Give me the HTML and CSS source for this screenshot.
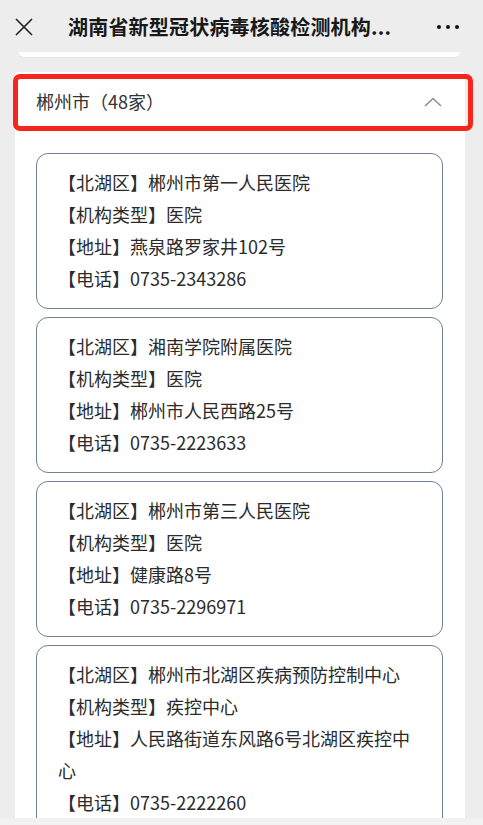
FILE: index.html
```html
<!DOCTYPE html>
<html lang="zh-CN">
<head>
    <meta charset="UTF-8">
    <meta name="viewport" content="width=device-width, initial-scale=1.0">
    <title>湖南省新型冠状病毒核酸检测机构</title>
    <link rel="stylesheet" href="styles.css">
</head>
<body>
    <header class="topbar">
        <svg class="close-icon" width="18" height="18" viewBox="0 0 18 18">
            <path d="M1 1 L17 17 M17 1 L1 17" stroke="#1f1f1f" stroke-width="1.6" fill="none"/>
        </svg>
        <h1 class="title">湖南省新型冠状病毒核酸检测机构...</h1>
        <div class="more">
            <span></span><span></span><span></span>
        </div>
    </header>

    <main class="content">
        <div class="prev-card"></div>

        <section class="panel">
            <div class="panel-head">
                <span class="city">郴州市（48家）</span>
                <svg class="chevron" width="18" height="10" viewBox="0 0 18 10">
                    <path d="M1 9 L9 1.5 L17 9" stroke="#8c8c8c" stroke-width="1.5" fill="none"/>
                </svg>
            </div>
            <div class="highlight"></div>

            <div class="list">
                <div class="item">
                    <p>【北湖区】郴州市第一人民医院</p>
                    <p>【机构类型】医院</p>
                    <p>【地址】燕泉路罗家井102号</p>
                    <p>【电话】0735-2343286</p>
                </div>
                <div class="item">
                    <p>【北湖区】湘南学院附属医院</p>
                    <p>【机构类型】医院</p>
                    <p>【地址】郴州市人民西路25号</p>
                    <p>【电话】0735-2223633</p>
                </div>
                <div class="item">
                    <p>【北湖区】郴州市第三人民医院</p>
                    <p>【机构类型】医院</p>
                    <p>【地址】健康路8号</p>
                    <p>【电话】0735-2296971</p>
                </div>
                <div class="item">
                    <p>【北湖区】郴州市北湖区疾病预防控制中心</p>
                    <p>【机构类型】疾控中心</p>
                    <p>【地址】人民路街道东风路6号北湖区疾控中心</p>
                    <p>【电话】0735-2222260</p>
                </div>
            </div>
        </section>
    </main>

    <div class="bottom-strip"></div>
</body>
</html>
```

FILE: styles.css
```css
html, body {
    margin: 0;
    padding: 0;
}
body {
    height: 825px;
    overflow: hidden;
    display: flex;
    flex-direction: column;
    background-color: #ededed;
    font-family: "Noto Sans CJK SC", "Noto Sans", sans-serif;
    color: #2b2b2b;
}
.topbar {
    height: 52px;
    flex-shrink: 0;
    display: flex;
    align-items: center;
    padding: 0 24px 0 15px;
    background-color: #ededed;
}
.close-icon {
    flex-shrink: 0;
    margin-top: 1px;
}
.title {
    flex: 1;
    margin: 0 0 0 35px;
    font-size: 20px;
    font-weight: 700;
    color: #181818;
    white-space: nowrap;
    letter-spacing: 0.2px;
}
.more {
    display: flex;
    gap: 5px;
    margin-top: 1px;
}
.more span {
    width: 4px;
    height: 4px;
    border-radius: 50%;
    background: #111;
}
.content {
    flex: 1;
    overflow: hidden;
}
.prev-card {
    height: 5px;
    margin: 0 23px 0 19px;
    background: #fff;
    border-radius: 0 0 8px 8px;
    box-shadow: 0 1px 2px rgba(0, 0, 0, 0.04);
}
.panel {
    position: relative;
    margin: 15px 18px 0 15px;
    background: #fff;
    border-radius: 4px 4px 0 0;
    height: 760px;
}
.panel-head {
    height: 58px;
    display: flex;
    align-items: center;
    justify-content: space-between;
    padding: 0 23px 0 21px;
}
.city {
    font-size: 18px;
    color: #333;
}
.chevron {
    margin-top: 1px;
}
/* red annotation frame drawn over the header row */
.highlight {
    position: absolute;
    left: -2px;
    top: 2px;
    width: 450px;
    height: 47px;
    border: 5px solid #f6261c;
    border-radius: 7px;
}
.list {
    display: flex;
    flex-direction: column;
    gap: 8px;
    padding: 23px 22px 0 21px;
}
.item {
    border: 1px solid #6e7f96;
    border-radius: 12px;
    padding: 12px 21px 14px 21px;
}
.item p {
    margin: 0;
    font-size: 18px;
    line-height: 32px;
    color: #2b2b2b;
}
.bottom-strip {
    height: 7px;
    flex-shrink: 0;
    background: #f2f2f2;
}
```
